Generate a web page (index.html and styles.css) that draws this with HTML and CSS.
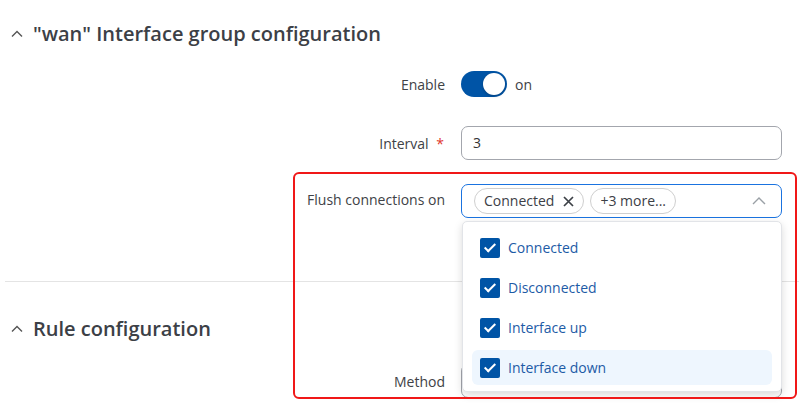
FILE: index.html
```html
<!doctype html>
<html lang="en">
<head>
  <meta charset="UTF-8">
  <meta name="viewport" content="width=device-width, initial-scale=1.0">
  <title>Failover</title>
  <link rel="stylesheet" href="styles.css">
</head>
<body>
  <section class="group">
    <h2 class="group-title">
      <svg class="chevron" width="12" height="8" viewBox="0 0 12 8"><path d="M1 6.5 L6 1.5 L11 6.5" fill="none" stroke="#555" stroke-width="1.4"/></svg>
      "wan" Interface group configuration
    </h2>

    <div class="form-row row-enable">
      <label class="form-label">Enable</label>
      <div class="form-field">
        <span class="toggle"><span class="knob"></span></span>
        <span class="toggle-text">on</span>
      </div>
    </div>

    <div class="form-row row-interval">
      <label class="form-label">Interval <span class="req">*</span></label>
      <div class="form-field">
        <div class="input">3</div>
      </div>
    </div>

    <div class="form-row row-flush">
      <label class="form-label">Flush connections on</label>
      <div class="form-field">
        <div class="select open">
          <span class="chip">Connected
            <svg class="chip-x" width="11" height="11" viewBox="0 0 11 11"><path d="M1 1 L10 10 M10 1 L1 10" stroke="#3c4046" stroke-width="1.7"/></svg>
          </span>
          <span class="chip">+3 more...</span>
          <svg class="select-arrow" width="14" height="8" viewBox="0 0 14 8"><path d="M1 7 L7 1 L13 7" fill="none" stroke="#9aa0a6" stroke-width="1.4"/></svg>
        </div>
        <ul class="dropdown">
          <li class="option"><span class="check"></span>Connected</li>
          <li class="option"><span class="check"></span>Disconnected</li>
          <li class="option"><span class="check"></span>Interface up</li>
          <li class="option hover"><span class="check"></span>Interface down</li>
        </ul>
      </div>
    </div>
  </section>

  <hr class="divider">

  <section class="group">
    <h2 class="group-title title-rule">
      <svg class="chevron" width="12" height="8" viewBox="0 0 12 8"><path d="M1 6.5 L6 1.5 L11 6.5" fill="none" stroke="#555" stroke-width="1.4"/></svg>
      Rule configuration
    </h2>
    <div class="form-row row-method">
      <label class="form-label">Method</label>
      <div class="form-field">
        <div class="input"></div>
      </div>
    </div>
  </section>

  <div class="highlight"></div>
</body>
</html>
```

FILE: styles.css
```css
body {
  margin: 0;
  font-family: 'Open Sans', 'Liberation Sans', sans-serif;
  color: #404246;
  background: #fff;
  position: relative;
  height: 405px;
  overflow: hidden;
}
.group-title {
  margin: 0;
  display: flex;
  align-items: center;
  font-size: 20px;
  font-weight: 600;
  color: #3c4046;
  line-height: 28px;
  padding-top: 20px;
  padding-left: 11px;
}
.chevron {
  margin-right: 10px;
}
.form-row {
  display: flex;
  align-items: center;
}
.form-label {
  width: 445px;
  text-align: right;
  font-size: 14px;
  color: #404246;
  box-sizing: border-box;
}
.form-field {
  margin-left: 16px;
  width: 321px;
  display: flex;
  align-items: center;
  position: relative;
}
.row-enable {
  margin-top: 23px;
  height: 26px;
}
.toggle {
  width: 46px;
  height: 26px;
  border-radius: 13px;
  background: #0054a6;
  position: relative;
  display: inline-block;
}
.knob {
  position: absolute;
  right: 2px;
  top: 2px;
  width: 22px;
  height: 22px;
  border-radius: 50%;
  background: #fff;
  box-shadow: 0 1px 3px rgba(0,0,0,0.25);
}
.toggle-text {
  margin-left: 8px;
  font-size: 14px;
}
.row-interval {
  margin-top: 29px;
}
.row-interval .form-label {
  padding-right: 1px;
}
.req {
  color: #e0352b;
  margin-left: 4px;
}
.input {
  box-sizing: border-box;
  width: 321px;
  height: 34px;
  border: 1px solid #a3a6ad;
  border-radius: 7px;
  padding: 0 11px;
  font-size: 14px;
  line-height: 32px;
  color: #333;
}
.row-flush {
  margin-top: 24px;
}
.row-flush .form-label {
  align-self: flex-start;
  padding-top: 6px;
}
.select {
  box-sizing: border-box;
  width: 321px;
  height: 34px;
  border: 1px solid #1a73e0;
  border-radius: 7px;
  display: flex;
  align-items: center;
  gap: 6px;
  padding: 0 12px;
}
.chip {
  box-sizing: border-box;
  height: 26px;
  line-height: 24px;
  border: 1px solid #cfcfcf;
  border-radius: 13px;
  padding: 0 9px;
  font-size: 14px;
  color: #3c4046;
  display: inline-flex;
  align-items: center;
}
.chip-x {
  margin-left: 9px;
}
.select-arrow {
  margin-left: auto;
  margin-right: 3px;
}
.dropdown {
  position: absolute;
  top: 37px;
  left: 1px;
  width: 320px;
  box-sizing: border-box;
  margin: 0;
  padding: 8px 9px 6px;
  list-style: none;
  background: #fff;
  border: 1px solid #e2e4e8;
  border-radius: 5px;
  box-shadow: 0 3px 8px rgba(0,0,0,0.15);
  z-index: 2;
}
.option {
  height: 35px;
  margin-bottom: 5px;
  display: flex;
  align-items: center;
  padding-left: 8px;
  border-radius: 6px;
  font-size: 14px;
  color: #1d5ba6;
}
.option:last-child {
  margin-bottom: 0;
}
.option.hover {
  background: #eef6fe;
}
.check {
  width: 20px;
  height: 20px;
  border-radius: 2px;
  background: #0054a6;
  margin-right: 8px;
  position: relative;
}
.check::after {
  content: '';
  position: absolute;
  left: 7px;
  top: 3px;
  width: 4px;
  height: 9px;
  border: solid #fff;
  border-width: 0 2px 2px 0;
  transform: rotate(45deg);
}
.divider {
  border: none;
  border-top: 1px solid #e4e4e4;
  margin: 63px 0 0 5px;
}
.title-rule {
  padding-top: 33px;
}
.row-method {
  margin-top: 21px;
}
.highlight {
  position: absolute;
  left: 293px;
  top: 172px;
  width: 504px;
  height: 227px;
  box-sizing: border-box;
  border: 2px solid #f01818;
  border-radius: 6px;
  pointer-events: none;
  z-index: 3;
}
```
